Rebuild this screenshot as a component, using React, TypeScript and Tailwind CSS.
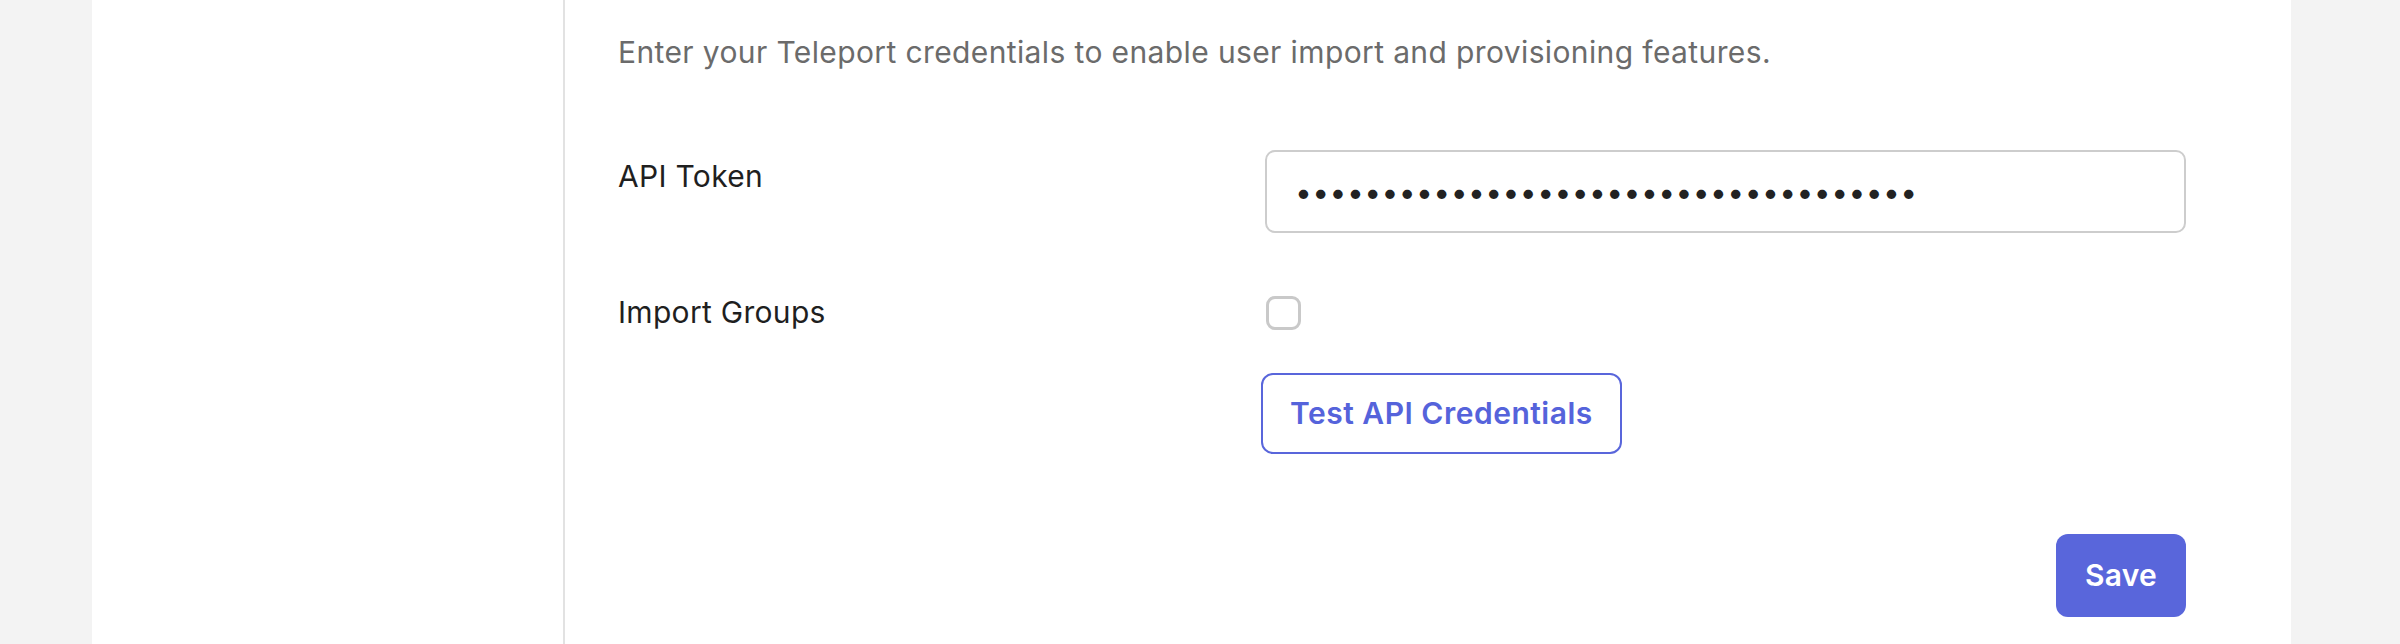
export default function App() {
  return (
    <div className="w-full h-[644px] bg-[#f3f3f3] flex pl-[92px] pr-[109px] overflow-hidden font-['Inter',sans-serif]">
      <div className="flex-1 bg-white flex">
        <div className="w-[473px] shrink-0 border-r-[2px] border-[#e2e2e2]" />

        <div className="flex-1 pl-[53px] pr-[105px] pt-[30px] flex flex-col">
          <p className="text-[30px] leading-[45px] tracking-[0.38px] text-[#6b6b6b]">
            Enter your Teleport credentials to enable user import and provisioning features.
          </p>

          <div className="flex items-start mt-[75px]">
            <label className="w-[647px] shrink-0 pt-[4px] text-[30px] leading-[45px] tracking-[0.3px] text-[#1f1f1f]">API Token</label>
            <input
              type="password"
              readOnly
              defaultValue={"a".repeat(36)}
              className="flex-1 h-[83px] rounded-[10px] border-2 border-[#cdcdcd] px-[28px] text-[30px] tracking-[0.42px] text-[#222222] outline-none font-['Inter',sans-serif]"
            />
          </div>

          <div className="flex items-center mt-[57px]">
            <label className="w-[648px] shrink-0 text-[30px] leading-[45px] tracking-[0.3px] text-[#1f1f1f]">Import Groups</label>
            <div className="w-[35px] h-[34px] rounded-[9px] border-[3px] border-[#c9c9c9] bg-white" />
          </div>

          <div className="flex mt-[38px]">
            <div className="w-[643px] shrink-0" />
            <button className="h-[81px] px-[27px] rounded-[12px] border-2 border-[#5966db] text-[#5563db] text-[30px] tracking-[0.5px] font-semibold bg-white">
              Test API Credentials
            </button>
          </div>

          <div className="flex justify-end mt-[80px]">
            <button className="w-[130px] h-[83px] rounded-[12px] bg-[#5966db] text-white text-[30px] tracking-[0.3px] font-semibold">
              Save
            </button>
          </div>
        </div>
      </div>
    </div>
  );
}
